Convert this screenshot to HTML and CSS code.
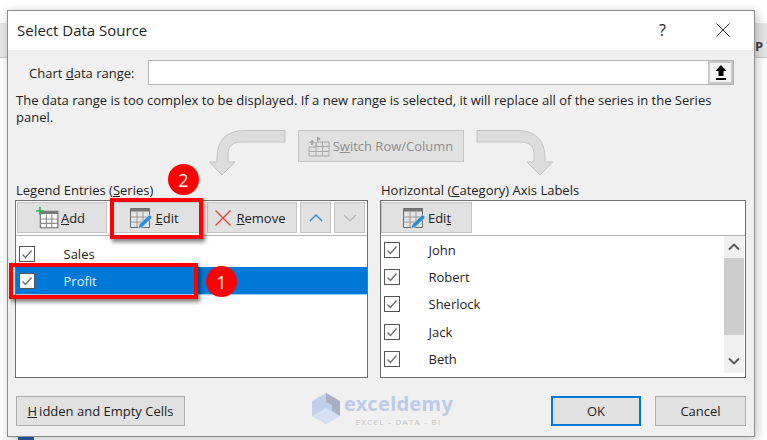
FILE: index.html
```html
<!DOCTYPE html>
<html lang="en">
  <head>
    <meta charset="UTF-8" />
    <meta name="viewport" content="width=device-width, initial-scale=1.0" />
    <title>Select Data Source</title>
    <link rel="stylesheet" href="styles.css">
  </head>
  <body>
    <svg class="icon-defs" width="0" height="0">
      <defs>
        <symbol id="table" viewBox="0 0 20 20">
          <path d="M3 3H19V18H3Z" fill="#fff" stroke="#6a6a6a" />
          <path d="M3 3H19V5.5H3Z" fill="#777" />
          <path d="M8.5 6V18M13.5 6V18M3 10H19M3 14H19" fill="none" stroke="#8a8a8a" />
        </symbol>
        <symbol id="table-edit" viewBox="0 0 24 24">
          <path d="M1.5 2.5H20.5V21.5H1.5Z" fill="#e4e4e4" stroke="#6a6a6a" />
          <path d="M1.5 2.5H20.5V5.5H1.5Z" fill="#777" />
          <path d="M8 6V21M14 6V16M1.5 11H20M1.5 16H14" fill="none" stroke="#9a9a9a" />
          <path d="M9 22.5L10.5 18L19.5 9.5C21 8.4 23.5 10.4 22.5 12.2L13.5 21Z" fill="#2b8fdc" stroke="#e4e4e4" stroke-width=".6" />
        </symbol>
        <symbol id="check" viewBox="0 0 14 14">
          <path d="M2.5 7.5L5.5 10.5L11.5 3.5" fill="none" stroke="#6e6e6e" stroke-width="1.3" />
        </symbol>
        <symbol id="big-arrow" viewBox="0 0 77 46">
          <path d="M76 .5H36C18 .5 8 10 8 28V32H.5L13 45L26 32H19V24C19 16 24 12 32 12H76Z" fill="#dcdcdc" stroke="#c2c2c2" />
        </symbol>
      </defs>
    </svg>

    <div class="sheet">
      <div class="sheet-tab sheet-tab-left"></div>
      <div class="sheet-tab sheet-tab-right">P</div>
      <div class="sheet-marker"></div>

      <div class="dialog">
        <div class="title-bar">
          <span class="title">Select Data Source</span>
          <span class="help">?</span>
          <svg class="close" width="14" height="14" viewBox="0 0 14 14">
            <path d="M.5 .5L13.5 13.5M13.5 .5L.5 13.5" stroke="#333" fill="none" />
          </svg>
        </div>

        <div class="dialog-body">
          <div class="range-row">
            <label class="range-label">Chart <u>d</u>ata range:</label>
            <div class="range-input">
              <div class="range-button">
                <svg width="12" height="17" viewBox="0 0 12 17">
                  <path d="M6 1L11.5 7H8.5V12H3.5V7H.5Z" fill="#000" />
                  <path d="M1 15H11" stroke="#000" stroke-width="2" />
                </svg>
              </div>
            </div>
          </div>

          <p class="message">The data range is too complex to be displayed. If a new range is selected, it will replace all of the series in the Series panel.</p>

          <div class="switch-row">
            <svg class="big-arrow" width="77" height="46"><use href="#big-arrow" /></svg>
            <button class="btn switch-button">
              <svg width="24" height="22" viewBox="0 0 24 22">
                <path d="M9 7H22V21H2V12H9ZM9 7V21M15.5 7V21M2 16.5H22M9 11.5H22" fill="none" stroke="#a8a8a8" />
                <path d="M2 8L5 4.5L8 8H6V10H4V8ZM10 1.5L14 4L10 6.5ZM6 4H10" fill="#a8a8a8" />
              </svg>
              <span>S<u>w</u>itch Row/Column</span>
            </button>
            <svg class="big-arrow flipped" width="77" height="46"><use href="#big-arrow" /></svg>
          </div>

          <div class="groups">
            <div class="group group-series">
              <div class="group-label">Legend Entries (<u>S</u>eries)</div>
              <div class="group-box">
                <div class="toolbar">
                  <button class="btn tool tool-add">
                    <svg width="24" height="24" viewBox="0 0 24 24">
                      <use href="#table" x="2" y="2" width="22" height="22" />
                      <path d="M5 1V9M1 5H9" stroke="#2fae4e" stroke-width="1.6" />
                    </svg>
                    <span><u>A</u>dd</span>
                  </button>
                  <button class="btn tool tool-edit">
                    <svg width="24" height="24"><use href="#table-edit" /></svg>
                    <span><u>E</u>dit</span>
                  </button>
                  <button class="btn tool tool-remove">
                    <svg width="16" height="16" viewBox="0 0 16 16">
                      <path d="M.5 .5L15.5 15.5M15.5 .5L.5 15.5" stroke="#e0403a" stroke-width="1.3" fill="none" />
                    </svg>
                    <span><u>R</u>emove</span>
                  </button>
                  <button class="btn tool tool-move">
                    <svg width="14" height="8" viewBox="0 0 14 8"><path d="M1 7L7 1L13 7" stroke="#2b8fdc" stroke-width="1.4" fill="none" /></svg>
                  </button>
                  <button class="btn tool tool-move">
                    <svg width="14" height="8" viewBox="0 0 14 8"><path d="M1 1L7 7L13 1" stroke="#b4b4b4" stroke-width="1.2" fill="none" /></svg>
                  </button>
                </div>
                <ul class="entries entries-series">
                  <li class="entry"><span class="tick"><svg width="14" height="14"><use href="#check" /></svg></span>Sales</li>
                  <li class="entry entry-selected"><span class="tick"><svg width="14" height="14"><use href="#check" /></svg></span>Profit</li>
                </ul>
              </div>
            </div>

            <div class="group group-axis">
              <div class="group-label">Horizontal (<u>C</u>ategory) Axis Labels</div>
              <div class="group-box">
                <div class="toolbar">
                  <button class="btn tool tool-axis-edit">
                    <svg width="24" height="24"><use href="#table-edit" /></svg>
                    <span>Edi<u>t</u></span>
                  </button>
                </div>
                <div class="entries-wrap">
                  <ul class="entries">
                    <li class="entry"><span class="tick"><svg width="14" height="14"><use href="#check" /></svg></span>John</li>
                    <li class="entry"><span class="tick"><svg width="14" height="14"><use href="#check" /></svg></span>Robert</li>
                    <li class="entry"><span class="tick"><svg width="14" height="14"><use href="#check" /></svg></span>Sherlock</li>
                    <li class="entry"><span class="tick"><svg width="14" height="14"><use href="#check" /></svg></span>Jack</li>
                    <li class="entry"><span class="tick"><svg width="14" height="14"><use href="#check" /></svg></span>Beth</li>
                  </ul>
                  <div class="scrollbar">
                    <div class="scroll-arrow">
                      <svg width="12" height="8" viewBox="0 0 12 8"><path d="M1 6.5L6 1.5L11 6.5" stroke="#555" stroke-width="1.8" fill="none" /></svg>
                    </div>
                    <div class="scroll-thumb"></div>
                    <div class="scroll-arrow scroll-arrow-down">
                      <svg width="12" height="8" viewBox="0 0 12 8"><path d="M1 1.5L6 6.5L11 1.5" stroke="#555" stroke-width="1.8" fill="none" /></svg>
                    </div>
                  </div>
                </div>
              </div>
            </div>
          </div>

          <div class="footer">
            <button class="btn footer-button hidden-cells"><u>H</u>idden and Empty Cells</button>
            <button class="btn footer-button ok-button">OK</button>
            <button class="btn footer-button cancel-button">Cancel</button>
          </div>
        </div>
      </div>

      <!-- Callouts drawn on top of the dialog -->
      <div class="callout callout-edit"></div>
      <div class="callout callout-profit"></div>
      <div class="badge badge-one">1</div>
      <div class="badge badge-two">2</div>

      <div class="watermark">
        <svg width="28" height="31" viewBox="0 0 28 31">
          <path d="M14 0L28 8V23L14 31L0 23V8Z" fill="#c3d0ec" />
          <path d="M14 0L28 8V23L20 18V12L14 9Z" fill="#aab0c4" />
          <path d="M0 23L14 15L28 23L14 31Z" fill="#d7e0f2" />
        </svg>
        <div class="watermark-text">
          <div class="watermark-name">exceldemy</div>
          <div class="watermark-tag">EXCEL - DATA - BI</div>
        </div>
      </div>
    </div>
  </body>
</html>
```

FILE: styles.css
```css
* {
  box-sizing: border-box;
}

body {
  margin: 0;
  background-color: #fff;
  font-family: "Open Sans", "Noto Sans", Arial, sans-serif;
  font-size: 13px;
  color: #222;
}

.icon-defs {
  position: absolute;
}

.sheet {
  position: relative;
  width: 767px;
  height: 440px;
  overflow: hidden;
  padding: 10px 0 0 7px;
  background-color: #fff;
}

.sheet-tab {
  position: absolute;
  top: 23px;
  height: 35px;
  background-color: #e6e6e6;
  border-bottom: 1px solid #c8c8c8;
}

.sheet-tab-left {
  left: 0;
  width: 8px;
}

.sheet-tab-right {
  left: 754px;
  width: 13px;
  padding-left: 1px;
  line-height: 46px;
  font-weight: bold;
  color: #444;
}

.sheet-marker {
  position: absolute;
  left: 18px;
  top: 436px;
  width: 16px;
  height: 4px;
  background-color: #2b5aa8;
}

.dialog {
  position: relative;
  width: 748px;
  height: 427px;
  border: 1px solid #8c8c8c;
  background-color: #f0f0f0;
  box-shadow: 2px 2px 10px rgba(0, 0, 0, 0.25);
}

.title-bar {
  display: flex;
  align-items: center;
  height: 39px;
  padding: 0 24px 2px 9px;
  background-color: #fff;
}

.title {
  flex: 1;
  font-size: 15px;
}

.help {
  margin-right: 50px;
  font-size: 16px;
}

.dialog-body {
  padding: 10px 8px 0;
}

.range-row {
  display: flex;
  align-items: center;
  height: 25px;
}

.range-label {
  width: 132px;
  padding-left: 13px;
}

.range-input {
  display: flex;
  justify-content: flex-end;
  width: 586px;
  height: 25px;
  border: 1px solid #b4b4b4;
  background-color: #fff;
}

.range-button {
  display: flex;
  align-items: center;
  justify-content: center;
  width: 25px;
  height: 23px;
  border: 2px solid #c8c8c8;
  background-color: #f4f4f4;
}

.message {
  margin: 7px 0 0;
  line-height: 17px;
}

.switch-row {
  display: flex;
  align-items: flex-start;
  height: 45px;
  margin-top: 4px;
  padding-left: 193px;
}

.flipped {
  transform: scaleX(-1);
}

.btn {
  display: flex;
  align-items: center;
  justify-content: center;
  gap: 2px;
  padding: 0;
  border: 1px solid #c4c4c4;
  background-color: #e1e1e1;
  font-family: inherit;
  font-size: 13px;
  color: #222;
}

.switch-button {
  width: 166px;
  height: 32px;
  margin: 0 12px 0 12px;
  padding-right: 2px;
  color: #8c8c8c;
}

.groups {
  display: flex;
  gap: 12px;
  margin: 7px 0 0 -1px;
}

.group-series {
  width: 353px;
}

.group-axis {
  width: 366px;
}

.group-label {
  height: 18px;
  padding-left: 1px;
  line-height: 17px;
}

.group-box {
  height: 178px;
  border: 1px solid #707070;
  background-color: #fff;
}

.toolbar {
  display: flex;
  height: 35px;
  padding: 1px;
  border-bottom: 1px solid #b4b4b4;
}

.tool {
  height: 31px;
}

.tool-add {
  width: 90px;
  padding-right: 4px;
}

.tool-edit {
  width: 87px;
  margin-left: 6px;
  padding-right: 5px;
}

.tool-remove {
  width: 90px;
  margin-left: 7px;
  padding-right: 4px;
  gap: 6px;
}

.tool-move {
  width: 31px;
  margin-left: 3px;
}

.tool-axis-edit {
  width: 91px;
  margin-left: -1px;
}

.entries {
  flex: 1;
  margin: 0;
  padding: 0;
  list-style: none;
}

.entries-series {
  padding-top: 4px;
}

.entry {
  display: flex;
  align-items: center;
  height: 27.3px;
  padding-left: 3px;
}

.entry-selected {
  background-color: #0078d7;
  box-shadow: inset 0 -1px #9cc8ec;
  color: #e4effa;
}

.tick {
  display: flex;
  align-items: center;
  justify-content: center;
  width: 16px;
  height: 16px;
  margin-right: 28.5px;
  border: 1px solid #555;
  background-color: #fff;
}

.entries-wrap {
  display: flex;
  height: 137px;
}

.scrollbar {
  display: flex;
  flex-direction: column;
  width: 20px;
  margin-right: 1px;
  background-color: #f0f0f0;
}

.scroll-arrow {
  display: flex;
  align-items: center;
  justify-content: center;
  height: 22px;
}

.scroll-arrow-down {
  margin-top: auto;
  height: 25px;
}

.scroll-thumb {
  height: 77px;
  background-color: #cdcdcd;
}

.footer {
  display: flex;
  margin-top: 18px;
}

.footer-button {
  height: 30px;
  border-color: #adadad;
}

.hidden-cells {
  width: 169px;
  margin-right: 366px;
}

.ok-button {
  width: 90px;
  margin-right: 14px;
  border: 2px solid #0078d7;
}

.cancel-button {
  width: 91px;
}

.callout {
  position: absolute;
  border: 4px solid #f00;
  box-shadow: 2px 3px 4px rgba(0, 0, 0, 0.5);
}

.callout-edit {
  left: 110px;
  top: 198px;
  width: 93px;
  height: 41px;
}

.callout-profit {
  left: 9px;
  top: 263px;
  width: 189px;
  height: 36px;
}

.badge {
  position: absolute;
  display: flex;
  align-items: center;
  justify-content: center;
  width: 31px;
  height: 31px;
  border-radius: 50%;
  background-color: #f00;
  color: #fff;
  font-size: 18px;
}

.badge-one {
  left: 206px;
  top: 266px;
}

.badge-two {
  left: 168px;
  top: 164px;
}

.watermark {
  position: absolute;
  left: 312px;
  top: 393px;
  display: flex;
  gap: 4px;
}

.watermark-name {
  margin-bottom: 2px;
  font-family: "Noto Sans", sans-serif;
  font-size: 20px;
  font-weight: bold;
  letter-spacing: 0.3px;
  line-height: 22px;
  color: #bccbea;
}

.watermark-tag {
  font-size: 8px;
  letter-spacing: 1.3px;
  line-height: 10px;
  color: #c4c4c4;
  text-align: center;
}
```
